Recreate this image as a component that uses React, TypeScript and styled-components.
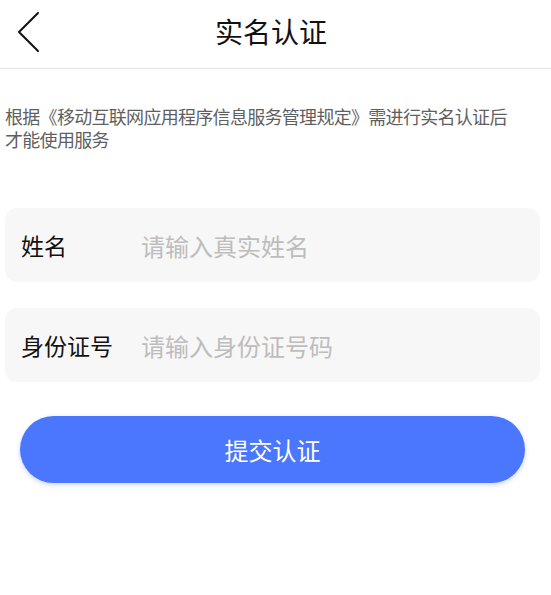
import React from 'react';
import styled, { createGlobalStyle } from 'styled-components';

const GlobalStyle = createGlobalStyle`
  * {
    box-sizing: border-box;
  }

  body {
    margin: 0;
    background: #fff;
    font-family: "Noto Sans CJK SC", "Noto Sans", sans-serif;
  }
`;

const Page = styled.div`
  width: 551px;
  min-height: 595px;
  background: #fff;
`;

const Header = styled.header`
  position: relative;
  height: 69px;
  display: flex;
  align-items: center;
  justify-content: center;
  border-bottom: 1px solid #e6e6e6;
`;

const BackButton = styled.button`
  position: absolute;
  left: 12px;
  top: 10px;
  width: 32px;
  height: 44px;
  padding: 0;
  border: none;
  background: none;
  display: flex;
  align-items: center;
  justify-content: center;
  cursor: pointer;
`;

const Title = styled.h1`
  margin: 0;
  font-size: 28px;
  font-weight: 400;
  color: #111;
  line-height: 1;
  padding: 0 9px 6px 0;
`;

const Notice = styled.p`
  margin: 0;
  padding: 36px 30px 0 5px;
  font-size: 18px;
  letter-spacing: -0.7px;
  line-height: 23px;
  color: #5f5f5f;
`;

const Form = styled.form`
  display: flex;
  flex-direction: column;
  gap: 26px;
  padding: 0 11px 0 5px;
  margin-top: 57px;
`;

const Field = styled.label`
  height: 74px;
  display: flex;
  align-items: center;
  padding: 0 16px;
  background: #f7f7f7;
  border-radius: 12px;
`;

const FieldLabel = styled.span`
  width: 120px;
  flex-shrink: 0;
  font-size: 23px;
  color: #111;
`;

const Input = styled.input`
  flex: 1;
  min-width: 0;
  border: none;
  outline: none;
  background: transparent;
  font-family: inherit;
  font-size: 24px;
  color: #333;
  padding: 0;

  &::placeholder {
    color: #bdbdbd;
  }
`;

const Submit = styled.button`
  margin: 8px 15px 0 15px;
  height: 67px;
  border: none;
  border-radius: 34px;
  background: #4a77fd;
  box-shadow: 0 2px 5px rgba(60, 100, 220, 0.25);
  color: #fff;
  font-family: inherit;
  font-size: 24px;
  cursor: pointer;
`;

const ChevronLeft = () => (
  <svg width="24" height="42" viewBox="0 0 24 42" fill="none">
    <path d="M22 2 L3 21 L22 40" stroke="#111" strokeWidth="2" strokeLinecap="round" strokeLinejoin="round" />
  </svg>
);

export default function App() {
  return (
    <Page>
      <GlobalStyle />
      <Header>
        <BackButton type="button">
          <ChevronLeft />
        </BackButton>
        <Title>实名认证</Title>
      </Header>
      <Notice>根据《移动互联网应用程序信息服务管理规定》需进行实名认证后才能使用服务</Notice>
      <Form onSubmit={(e) => e.preventDefault()}>
        <Field>
          <FieldLabel>姓名</FieldLabel>
          <Input placeholder="请输入真实姓名" />
        </Field>
        <Field>
          <FieldLabel>身份证号</FieldLabel>
          <Input placeholder="请输入身份证号码" />
        </Field>
        <Submit type="submit">提交认证</Submit>
      </Form>
    </Page>
  );
}
